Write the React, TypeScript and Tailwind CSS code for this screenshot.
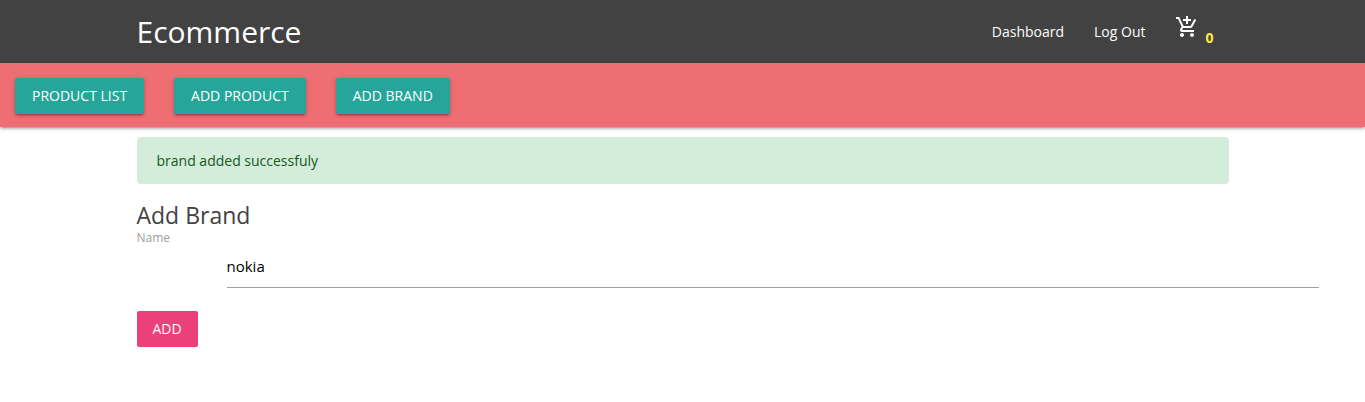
import { useState } from "react";
import type { ReactNode } from "react";
import { MdAddShoppingCart } from "react-icons/md";

function NavButton({ children }: { children: ReactNode }) {
  return (
    <li>
      <a
        href="#"
        className="block h-9 rounded-xs bg-[#26a69a] px-[17px] text-[14px] leading-9 text-white uppercase shadow-[0_2px_2px_0_rgba(0,0,0,0.14),0_3px_1px_-2px_rgba(0,0,0,0.12),0_1px_5px_0_rgba(0,0,0,0.2)]"
      >
        {children}
      </a>
    </li>
  );
}

export default function App() {
  const [name, setName] = useState("nokia");

  return (
    <div className="font-['Segoe_UI','Open_Sans',sans-serif] text-[14px] text-black/87">
      <header className="bg-[#424242] text-white">
        <div className="mx-auto flex h-[63px] w-4/5 items-center justify-between">
          <a href="#" className="pt-px text-[30px] leading-[62px]">
            Ecommerce
          </a>
          <nav>
            <ul className="flex items-center">
              <li>
                <a href="#" className="block px-[15px] leading-[63px]">
                  Dashboard
                </a>
              </li>
              <li>
                <a href="#" className="block px-[15px] leading-[63px]">
                  Log Out
                </a>
              </li>
              <li>
                <a href="#" aria-label="Cart" className="flex items-center gap-[6px] px-[15px]">
                  <MdAddShoppingCart className="mb-[10px] size-6" />
                  <span className="pt-3 font-bold text-[#ffeb3b]">0</span>
                </a>
              </li>
            </ul>
          </nav>
        </div>
      </header>

      <nav className="bg-[#ee6e73] shadow-[0_2px_2px_0_rgba(0,0,0,0.14),0_3px_1px_-2px_rgba(0,0,0,0.12),0_1px_5px_0_rgba(0,0,0,0.2)]">
        <ul className="flex h-16 items-center gap-[30px] px-[15px] pt-px">
          <NavButton>Product List</NavButton>
          <NavButton>Add Product</NavButton>
          <NavButton>Add Brand</NavButton>
        </ul>
      </nav>

      <main className="mx-auto w-4/5 pt-[10px]">
        <div role="status" className="rounded-sm bg-[#d4edda] px-5 py-3 leading-[23px] text-[#155724]">
          brand added successfuly
        </div>
        <form onSubmit={(e) => e.preventDefault()}>
          <h1 className="mt-[15px] text-[23px] leading-8 text-[#424242]">Add Brand</h1>
          <label htmlFor="brand-name" className="block text-[12px] leading-[14px] text-[#9e9e9e]">
            Name
          </label>
          <input
            id="brand-name"
            type="text"
            value={name}
            onChange={(e) => setName(e.target.value)}
            className="ml-[90px] block h-[43px] w-full border-b border-[#9e9e9e] bg-transparent pb-px text-[15px] text-black outline-none"
          />
          <button
            type="submit"
            className="mt-[23px] h-9 rounded-xs bg-[#ec407a] px-4 text-[14px] leading-9 text-white uppercase"
          >
            Add
          </button>
        </form>
      </main>
    </div>
  );
}
